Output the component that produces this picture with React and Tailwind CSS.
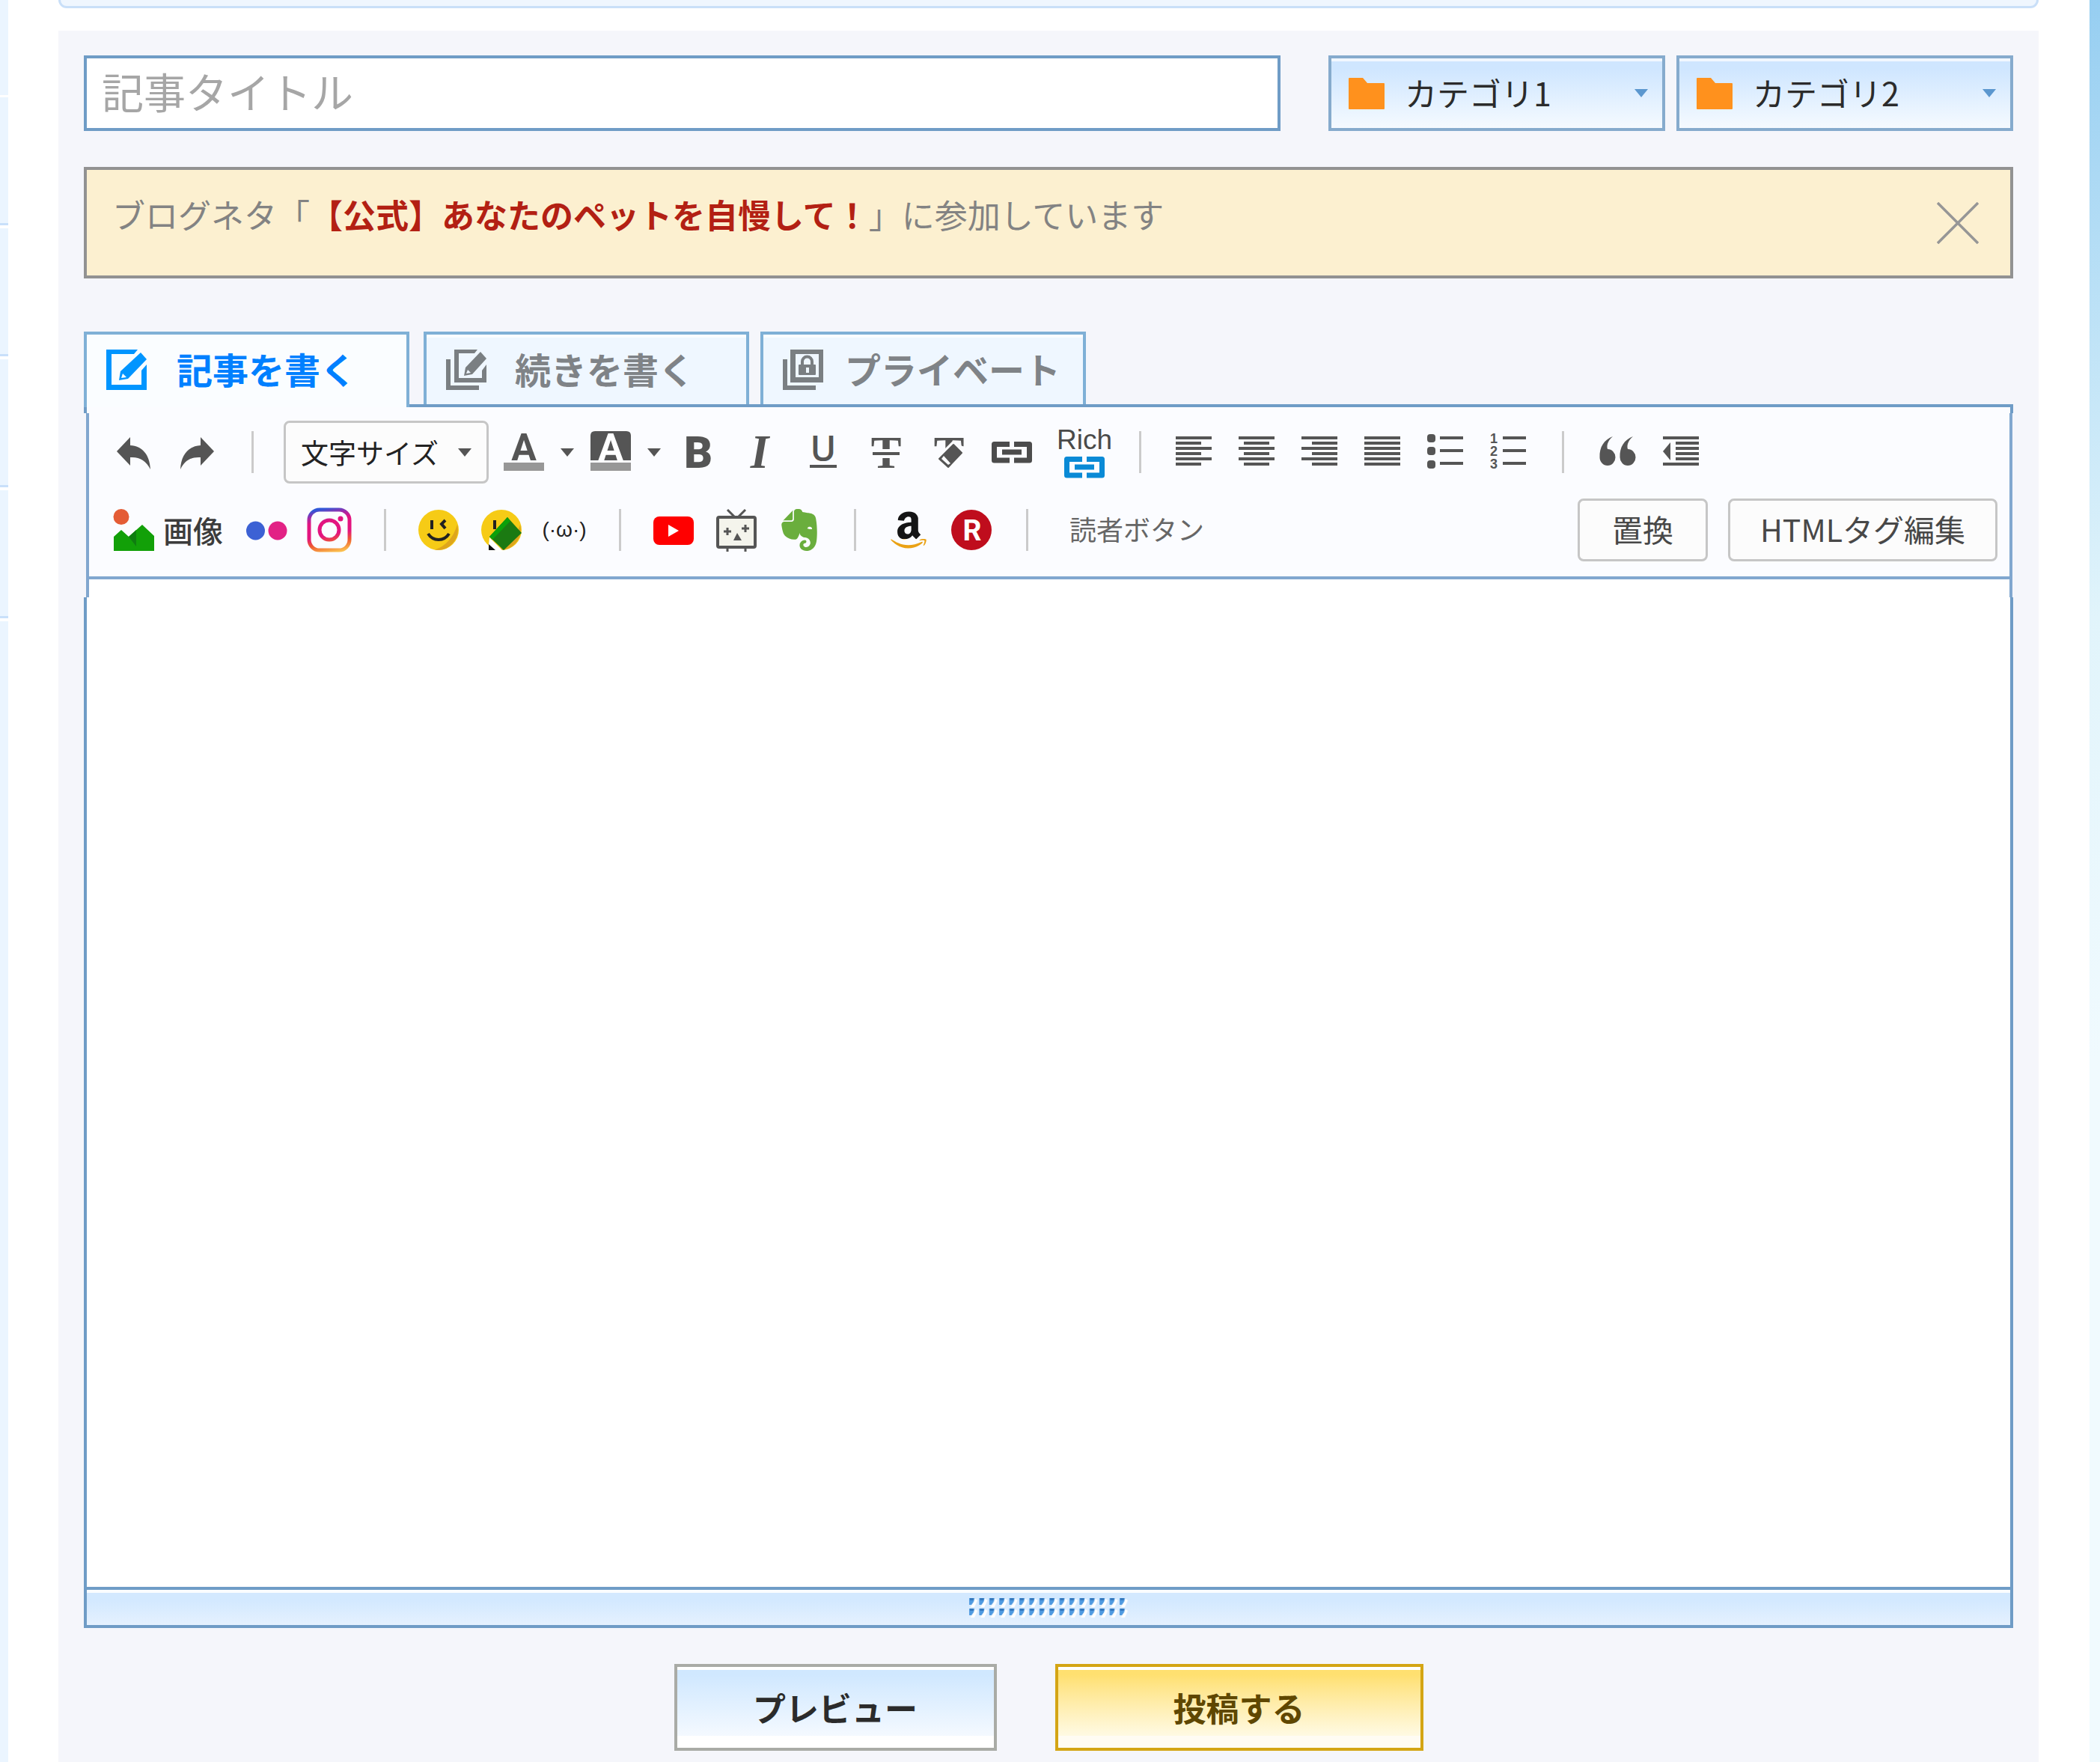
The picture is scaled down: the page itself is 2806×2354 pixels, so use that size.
import { FaAmazon } from 'react-icons/fa';
import { SiEvernote } from 'react-icons/si';

const FULL = [3, 51];

function Icon({ children, className = 'size-[54px]', box = '0 0 54 54' }) {
    return (
        <svg viewBox={box} className={`shrink-0 overflow-visible ${className}`} fill="#555" aria-hidden="true">
            {children}
        </svg>
    );
}

function Tool({ label, className = 'w-[84px]', children }) {
    return (
        <button type="button" aria-label={label} className={`flex h-[84px] shrink-0 items-center justify-center ${className}`}>
            {children}
        </button>
    );
}

function Divider({ className = 'ml-[31px] mr-[28px]' }) {
    return <div className={`h-[56px] w-[3px] shrink-0 bg-[#cbcbcb] ${className}`} />;
}

function Caret({ className = 'text-[#555]' }) {
    return (
        <svg viewBox="0 0 18 11" className={`pointer-events-none h-[11px] w-[18px] shrink-0 ${className}`} fill="currentColor" aria-hidden="true">
            <path d="M0 0h18L9 11z" />
        </svg>
    );
}

function Lines({ rows, step = 7 }) {
    return rows.map(([from, to], i) => (
        <rect key={i} x={from} y={6 + i * step} width={to - from} height="4" />
    ));
}

function LinkShape({ color = '#4c4c4c' }) {
    return (
        <g fill="none" stroke={color} strokeWidth="7" strokeLinejoin="round">
            <path d="M24 16.500H3.500V38H24" />
            <path d="M30 16.500H50.500V38H30" />
            <path d="M14 27H40" />
        </g>
    );
}

function Category({ id, name }) {
    return (
        <label
            htmlFor={id}
            className="flex h-[101px] w-[450px] items-center border-4 border-[#86abcd] bg-linear-to-b from-[#cfe6ff] from-15% to-[#f5faff] pr-[19px] pl-[23px] shadow-[inset_0_4px_0_#f1f7ff]"
        >
            <svg viewBox="0 0 48 42" className="mr-[27px] h-[42px] w-[48px] shrink-0" fill="#ff911d" aria-hidden="true">
                <path d="M0 1Q0 0 1 0H19L25 7H47Q48 7 48 8V41Q48 42 47 42H1Q0 42 0 41Z" />
            </svg>
            <select id={id} aria-label={name} className="min-w-0 flex-1 appearance-none pb-[4px] text-[43px] leading-[72px] text-[#2b2b2b]">
                <option>{name}</option>
            </select>
            <Caret className="text-[#5b97cf]" />
        </label>
    );
}

/* Sheet outline with a pencil (or a padlock) on it */
function SheetIcon({ kind }) {
    if (kind === 'write') {
        return (
            <Icon>
                <g fill="#0095ff">
                    <path d="M0 0H42L37 6H7V47H47V28L54 20V54H0Z" />
                    <path d="M46 4L54 13L29 39L17 41L19 29Z" />
                    <path d="M22 32L27 37L20 38Z" fill="#fafdff" />
                </g>
            </Icon>
        );
    }
    return (
        <Icon>
            <g fill="#7a7f82">
                <path d="M0 13H6V48H44V54H0Z" />
                {kind === 'more' ? (
                    <>
                        <path d="M11 0H42L38 5H17V38H48V28L54 20V44H11Z" />
                        <path d="M46 3L54 12L35 33L24 35L26 24Z" />
                        <path d="M29 27L33 31L27 32Z" fill="#eff7ff" />
                    </>
                ) : (
                    <>
                        <path d="M10 0H54V44H10ZM17 6V37H48V6Z" fillRule="evenodd" />
                        <rect x="21" y="20" width="23" height="14" rx="1" />
                        <path d="M26 21V16a6.500 6.500 0 0 1 13 0V21" fill="none" stroke="#7a7f82" strokeWidth="4" />
                        <rect x="31" y="24" width="4" height="7" fill="#eff7ff" />
                    </>
                )}
            </g>
        </Icon>
    );
}

function Tab({ kind, className = '', children }) {
    return (
        <button
            type="button"
            className={`flex h-[97px] w-[435px] items-center border-4 border-b-0 border-[#7fb0d6] bg-[#eff7ff] pl-[26px] text-[48px] leading-[72px] font-bold text-[#7f8387] shadow-[inset_0_4px_0_#fafdff] ${className}`}
        >
            <SheetIcon kind={kind} />
            <span className="pb-[4px]">{children}</span>
        </button>
    );
}

function Face() {
    return (
        <>
            <circle cx="27" cy="27" r="27" fill="#f6cb16" />
            <path d="M52 20A27 27 0 0 1 22 53.500Q44 46 52 20Z" fill="#dea61c" />
            <path d="M18 14V26M36 14L31 19L36 25" fill="none" stroke="#222" strokeWidth="4" />
        </>
    );
}

function FormatRow() {
    return (
        <div className="flex h-[84px] items-center">
            <Tool label="元に戻す">
                <Icon>
                    <path d="M4 26L22 7V18C38 19 48 30 49 50C43 38 34 33 22 34V45Z" />
                </Icon>
            </Tool>
            <Tool label="やり直し">
                <Icon>
                    <path d="M50 26L32 7V18C16 19 6 30 5 50C11 38 20 33 32 34V45Z" />
                </Icon>
            </Tool>
            <Divider className="mr-[40px] ml-[31px]" />
            <label htmlFor="font-size" className="mr-[5px] flex h-[84px] w-[274px] shrink-0 items-center rounded-lg border-[3px] border-[#c6c6c6] bg-[#fcfcfc] pr-[20px] pl-[20px]">
                <select id="font-size" aria-label="文字サイズ" className="min-w-0 flex-1 appearance-none text-[37px] leading-[60px] text-[#222]">
                    <option>文字サイズ</option>
                </select>
                <Caret />
            </label>
            <Tool label="文字色">
                <Icon>
                    <text x="27" y="38" textAnchor="middle" fontFamily="Roboto, sans-serif" fontWeight="700" fontSize="50">A</text>
                    <rect y="41" width="54" height="11" fill="#979797" />
                </Icon>
            </Tool>
            <Tool label="文字色を選ぶ" className="w-[32px]"><Caret /></Tool>
            <Tool label="背景色">
                <Icon>
                    <path d="M0 5Q0 -1 6 -1H48Q54 -1 54 5V38H0Z" />
                    <text x="27" y="38" textAnchor="middle" fontFamily="Roboto, sans-serif" fontWeight="700" fontSize="50" fill="#fff">A</text>
                    <rect y="41" width="54" height="11" fill="#979797" />
                </Icon>
            </Tool>
            <Tool label="背景色を選ぶ" className="w-[32px]"><Caret /></Tool>
            <Tool label="太字">
                <Icon>
                    <text x="28" y="48" textAnchor="middle" fontFamily="Roboto, sans-serif" fontWeight="900" fontSize="59">B</text>
                </Icon>
            </Tool>
            <Tool label="斜体">
                <Icon>
                    <text x="26" y="48" textAnchor="middle" fontFamily="Liberation Serif, serif" fontStyle="italic" fontWeight="700" fontSize="63">I</text>
                </Icon>
            </Tool>
            <Tool label="下線">
                <Icon>
                    <text x="27" y="39" textAnchor="middle" fontFamily="Open Sans, sans-serif" fontWeight="600" fontSize="47">U</text>
                    <rect x="9" y="44" width="36" height="4" />
                </Icon>
            </Tool>
            <Tool label="取り消し線">
                <Icon>
                    <text x="27" y="48" textAnchor="middle" fontFamily="Liberation Serif, serif" fontWeight="700" fontSize="61">T</text>
                    <rect x="6" y="23" width="42" height="12" fill="#fbfcff" />
                    <rect x="9" y="27" width="36" height="4" />
                </Icon>
            </Tool>
            <Tool label="書式をクリア">
                <Icon>
                    <text x="27" y="48" textAnchor="middle" fontFamily="Liberation Serif, serif" fontWeight="700" fontSize="61">T</text>
                    <path d="M6 54V24H20L32 12L54 24V54Z" fill="#fbfcff" />
                    <path d="M33 17L44 28L26 47L14 36Z" stroke="#555" strokeWidth="2" strokeLinejoin="round" />
                    <path d="M20 32L29 42L26 44L17 36Z" fill="#fbfcff" />
                </Icon>
            </Tool>
            <Tool label="リンク">
                <Icon><LinkShape /></Icon>
            </Tool>
            <button type="button" className="mr-px ml-[6px] flex w-[98px] shrink-0 flex-col items-center font-['Liberation_Sans',sans-serif] text-[37px] leading-[40px] text-[#4a4a4a]">
                Rich
                <Icon className="h-[32px] w-[54px]" box="0 11 54 32"><LinkShape color="#0a8ad6" /></Icon>
            </button>
            <Divider className="mr-[28px] ml-[23px]" />
            <Tool label="左揃え">
                <Icon><Lines rows={[FULL, [3, 37], FULL, [3, 37], FULL, [3, 37]]} /></Icon>
            </Tool>
            <Tool label="中央揃え">
                <Icon><Lines rows={[FULL, [10, 44], FULL, [10, 44], FULL, [10, 44]]} /></Icon>
            </Tool>
            <Tool label="右揃え">
                <Icon><Lines rows={[FULL, [17, 51], FULL, [17, 51], FULL, [17, 51]]} /></Icon>
            </Tool>
            <Tool label="両端揃え">
                <Icon><Lines rows={[FULL, FULL, FULL, FULL, FULL, FULL]} /></Icon>
            </Tool>
            <Tool label="箇条書き">
                <Icon>
                    {[8, 25, 43].map((y) => <rect key={y} x="3" y={y - 5} width="11" height="11" rx="4" />)}
                    <Lines step={17} rows={[[20, 51], [20, 51], [20, 51]]} />
                </Icon>
            </Tool>
            <Tool label="番号付きリスト">
                <Icon>
                    {[1, 2, 3].map((n) => (
                        <text key={n} x="8" y={17 * n - 2} textAnchor="middle" fontFamily="Liberation Sans, sans-serif" fontWeight="700" fontSize="18">{n}</text>
                    ))}
                    <Lines step={17} rows={[[20, 51], [20, 51], [20, 51]]} />
                </Icon>
            </Tool>
            <Divider className="mx-[30px]" />
            <Tool label="引用">
                <Icon>
                    <path d="M20 6C8 11 2 20 2.500 34A10.500 11 0 1 0 13 23C11 17 15 10 20 6Z" />
                    <path d="M47 6C35 11 29 20 29.500 34A10.500 11 0 1 0 40 23C38 17 42 10 47 6Z" />
                </Icon>
            </Tool>
            <Tool label="引用解除">
                <Icon>
                    <Lines rows={[FULL, [20, 51], [20, 51], [20, 51], [20, 51], FULL]} />
                    <path d="M3 26L13 14V38Z" />
                </Icon>
            </Tool>
        </div>
    );
}

function InsertRow() {
    return (
        <div className="flex h-[84px] items-center">
            <button type="button" className="ml-[33px] flex w-[162px] shrink-0 items-center gap-[12px] text-[40px] leading-[56px] font-medium text-[#3c3c3c]">
                <Icon className="h-[56px] w-[54px]" box="0 0 54 56">
                    <circle cx="10" cy="10.500" r="10.500" fill="#e45c35" />
                    <path d="M0 56V37L10 28L20 37L38 21L54 36V56Z" fill="#12a008" />
                    <path d="M20 37L30 28V50Z" fill="#0f7d10" />
                </Icon>
                画像
            </button>
            <Tool label="Flickr">
                <Icon>
                    <circle cx="12.500" cy="28" r="12.500" fill="#3c61d4" />
                    <circle cx="42" cy="28" r="12.500" fill="#e22285" />
                </Icon>
            </Tool>
            <Tool label="Instagram">
                <Icon className="size-[60px]" box="0 0 60 60">
                    <defs>
                        <linearGradient id="insta" gradientUnits="userSpaceOnUse" x1="24" y1="0" x2="36" y2="60">
                            <stop offset="0.02" stopColor="#2f57d8" />
                            <stop offset="0.16" stopColor="#a02aa8" />
                            <stop offset="0.3" stopColor="#e3147f" />
                            <stop offset="0.6" stopColor="#e3147f" />
                            <stop offset="0.78" stopColor="#ee5a30" />
                            <stop offset="1" stopColor="#fbc04e" />
                        </linearGradient>
                    </defs>
                    <g fill="none" stroke="url(#insta)" strokeWidth="5">
                        <rect x="3" y="3" width="54" height="54" rx="14" />
                        <circle cx="30" cy="30" r="13" />
                    </g>
                    <circle cx="45" cy="15" r="3.500" fill="#e3147f" />
                </Icon>
            </Tool>
            <Divider />
            <Tool label="絵文字">
                <Icon>
                    <Face />
                    <path d="M13 32Q18 40 27 40T41 32" fill="none" stroke="#222" strokeWidth="4" />
                </Icon>
            </Tool>
            <Tool label="絵文字辞典">
                <Icon>
                    <Face />
                    <path d="M11 37L30 56L24 56H9Z" fill="#fff" />
                    <path d="M10 46L19 54H10Z" fill="#111" />
                    <path d="M35 10L54 31L30 54L11 36Z" fill="#1b7a12" />
                    <path d="M35 10L39 15L15 40L11 36Z" fill="#0ba00a" />
                </Icon>
            </Tool>
            <button type="button" className="w-[84px] shrink-0 font-['Liberation_Sans',sans-serif] text-[28px] leading-[40px] text-[#222]">
                (·ω·)
            </button>
            <Divider />
            <Tool label="YouTube">
                <Icon>
                    <rect y="9" width="54" height="38" rx="8" fill="#f00" />
                    <path d="M20 20L34 28L20 36Z" fill="#fff" />
                </Icon>
            </Tool>
            <Tool label="ニコニコ動画">
                <Icon className="h-[58px] w-[54px]" box="0 -2 54 58">
                    <path d="M15 0L24 9M39 0L30 9M15 52V56M39 52V56" fill="none" stroke="#555" strokeWidth="3" />
                    <rect x="2" y="10" width="50" height="40" rx="2" fill="#f4f4ec" stroke="#555" strokeWidth="4" />
                    <path d="M15 24V34M10 29H20M39 20V30M34 25H44" fill="none" stroke="#555" strokeWidth="3" />
                    <path d="M28 31L34 41H23Z" />
                </Icon>
            </Tool>
            <Tool label="Evernote">
                <SiEvernote className="size-[56px] text-[#6aae3d]" />
            </Tool>
            <Divider />
            <Tool label="Amazon">
                <svg className="size-0" aria-hidden="true">
                    <linearGradient id="amazon" x1="0" y1="0" x2="0" y2="1">
                        <stop offset="0.75" stopColor="#151515" />
                        <stop offset="0.75" stopColor="#eaa215" />
                    </linearGradient>
                </svg>
                <FaAmazon className="size-[56px] fill-[url(#amazon)]" />
            </Tool>
            <Tool label="楽天">
                <Icon>
                    <circle cx="27" cy="27" r="27" fill="#bf0d1d" />
                    <text x="28" y="41" textAnchor="middle" fontFamily="Roboto, sans-serif" fontWeight="700" fontSize="39" fill="#fff">R</text>
                </Icon>
            </Tool>
            <Divider />
            <button type="button" className="px-[27px] pb-[4px] text-[36px] leading-[56px] text-[#666]">読者ボタン</button>
            <div className="mr-[16px] ml-auto flex gap-[27px] text-[41px] leading-[60px] text-[#484848]">
                <button type="button" className="h-[84px] w-[174px] rounded-lg border-[3px] border-[#c6c6c6] bg-[#fcfcfc] pb-[4px]">置換</button>
                <button type="button" className="h-[84px] w-[360px] rounded-lg border-[3px] border-[#c6c6c6] bg-[#fcfcfc] pb-[4px]">HTMLタグ編集</button>
            </div>
        </div>
    );
}

function Editor() {
    return (
        <section className="mt-[71px]">
            <div className="relative -mb-[4px] flex h-[101px] items-start">
                <Tab kind="write" className="mr-[19px] h-[101px] gap-[40px] border-[#6f9cc6] bg-[#fafdff] pb-[4px] text-[#0080ff]">記事を書く</Tab>
                <Tab kind="more" className="mr-[15px] gap-[38px]">続きを書く</Tab>
                <Tab kind="private" className="gap-[29px]">プライベート</Tab>
            </div>
            <div className="h-[12px] border-4 border-b-0 border-[#6f9cc6] bg-[#fbfcff]" />
            <div className="mr-px ml-[3px] border-x-4 border-[#81a7cf] bg-white">
                <div className="border-b-4 border-[#81a7cf] bg-[#fbfcff] pt-[10px] pb-[20px]">
                    <div className="ml-[18px]">
                        <FormatRow />
                    </div>
                    <div className="mt-[20px]">
                        <InsertRow />
                    </div>
                </div>
                <div className="h-[24px]" />
            </div>
            <textarea aria-label="本文" className="block h-[1322px] w-full resize-none border-x-4 border-[#6f9cc6] bg-white p-6 text-[44px] outline-none" />
            <div className="flex h-[55px] items-center justify-center border-4 border-[#6f9cc6] bg-linear-to-b from-[#d3e9ff] from-30% to-[#e5f1fe] shadow-[inset_0_4px_0_#fafdff]">
                <svg viewBox="0 0 214 28" className="h-[28px] w-[214px]" aria-hidden="true">
                    <defs>
                        <pattern id="grip" width="13.400" height="14" patternUnits="userSpaceOnUse">
                            <path d="M9 2L12 4L8 13H3Z" fill="#fff" />
                            <path d="M1 1H8L7 6L4 10H1Z" fill="#4f9ae0" />
                            <rect x="2" y="1" width="5" height="3" fill="#3478bd" />
                        </pattern>
                    </defs>
                    <rect width="214" height="28" fill="url(#grip)" />
                </svg>
            </div>
        </section>
    );
}

function SideList() {
    return (
        <aside className="w-[11px] shrink-0 bg-[#ebf5ff]">
            <div className="h-[130px] border-b-[3px] border-white" />
            {[0, 1, 2, 3].map((i) => (
                <div key={i} className="h-[175px] border-b-4 border-white">
                    <div className="h-full border-b-[3px] border-[#c9e0fa]" />
                </div>
            ))}
        </aside>
    );
}

export default function App() {
    return (
        <div className="flex min-h-screen bg-white font-['Noto_Sans_CJK_JP',sans-serif]">
            <SideList />
            <main className="flex min-w-0 flex-1 flex-col pr-[68px] pl-[67px]">
                <div className="h-[11px] rounded-b-[16px] border-[3px] border-t-0 border-[#c9dff8] bg-[#eff6fe]" />
                <form className="mt-[30px] flex-1 bg-[#f5f6fb] px-[34px] pt-[33px] pb-[14px]">
                    <div className="flex gap-[15px]">
                        <input
                            type="text"
                            aria-label="記事タイトル"
                            placeholder="記事タイトル"
                            className="mr-[49px] h-[101px] min-w-0 flex-1 border-4 border-[#6f9cc6] bg-white px-[20px] pb-[8px] text-[56px] outline-none placeholder:text-[#a6a6a6]"
                        />
                        <Category id="category1" name="カテゴリ1" />
                        <Category id="category2" name="カテゴリ2" />
                    </div>
                    <div className="mt-[48px] flex h-[149px] items-center justify-between border-4 border-[#929292] bg-[#fcf0d0] pr-[42px] pl-[34px]">
                        <p className="pb-[24px] text-[44px] leading-[64px] text-[#838383] [text-spacing-trim:space-all]">
                            ブログネタ「<a href="#neta" className="font-bold text-[#b32013]">【公式】あなたのペットを自慢して！</a>」に参加しています
                        </p>
                        <button type="button" aria-label="閉じる">
                            <svg viewBox="0 0 56 56" className="size-[56px]" aria-hidden="true">
                                <path d="M1 1L55 55M55 1L1 55" stroke="#969696" strokeWidth="3.500" />
                            </svg>
                        </button>
                    </div>
                    <Editor />
                    <div className="mt-[48px] flex justify-center gap-[78px] text-[44px] font-bold">
                        <button
                            type="button"
                            className="h-[116px] w-[431px] border-4 border-[#a9aba6] bg-linear-to-b from-[#d0e8ff] from-10% via-[#f4f9ff] via-85% to-white to-85% text-[#2b2b2b] shadow-[inset_0_4px_0_#fff]"
                        >
                            プレビュー
                        </button>
                        <button
                            type="submit"
                            className="h-[116px] w-[492px] border-4 border-[#d4a514] bg-linear-to-b from-[#ffe070] from-10% via-[#fffae3] via-85% to-[#fffcf3] to-85% text-[#5f4700] shadow-[inset_0_4px_0_#fff]"
                        >
                            投稿する
                        </button>
                    </div>
                </form>
            </main>
            <div className="w-[14px] shrink-0 bg-linear-to-b from-[#96cef1] via-[#e1f4fb] via-35% to-[#f0fafe] to-60%" />
        </div>
    );
}
